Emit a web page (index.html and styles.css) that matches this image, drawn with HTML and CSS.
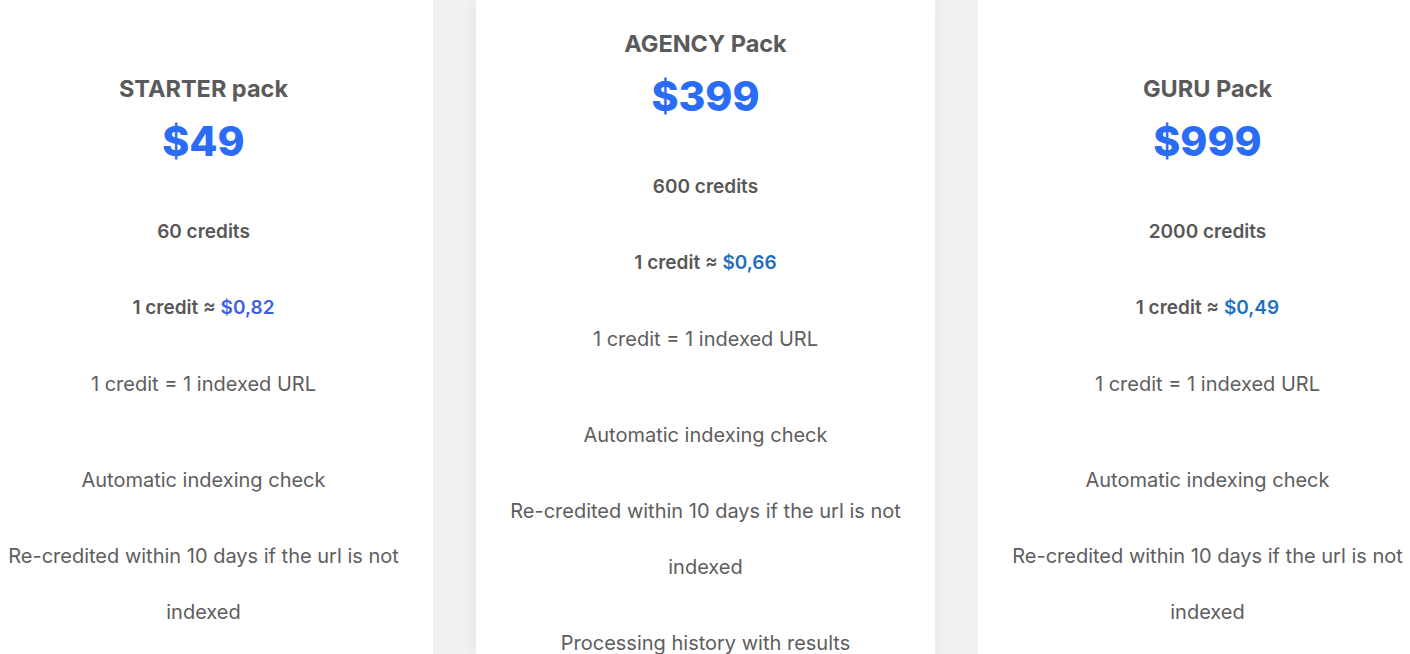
FILE: index.html
```
<!DOCTYPE html>
<html lang="en">
<head>
<meta charset="utf-8">
<title>Pricing</title>
<link rel="stylesheet" href="styles.css">
</head>
<body>
<div class="plans">
  <section class="card">
    <h3 class="title">STARTER pack</h3>
    <div class="price">$49</div>
    <ul class="features">
      <li class="strong">60 credits</li>
      <li class="strong">1 credit ≈ <span class="rate rate-indigo">$0,82</span></li>
      <li>1 credit = 1 indexed URL</li>
      <li class="spaced">Automatic indexing check</li>
      <li>Re-credited within 10 days if the url is not indexed</li>
    </ul>
  </section>
  <section class="card card-featured">
    <h3 class="title">AGENCY Pack</h3>
    <div class="price">$399</div>
    <ul class="features">
      <li class="strong">600 credits</li>
      <li class="strong">1 credit ≈ <span class="rate">$0,66</span></li>
      <li>1 credit = 1 indexed URL</li>
      <li class="spaced">Automatic indexing check</li>
      <li>Re-credited within 10 days if the url is not indexed</li>
      <li>Processing history with results</li>
    </ul>
  </section>
  <section class="card">
    <h3 class="title">GURU Pack</h3>
    <div class="price">$999</div>
    <ul class="features">
      <li class="strong">2000 credits</li>
      <li class="strong">1 credit ≈ <span class="rate">$0,49</span></li>
      <li>1 credit = 1 indexed URL</li>
      <li class="spaced">Automatic indexing check</li>
      <li>Re-credited within 10 days if the url is not indexed</li>
    </ul>
  </section>
</div>
</body>
</html>
```
FILE: styles.css
```
html, body {
  margin: 0;
  padding: 0;
  height: 100%;
  overflow: hidden;
  background: #f1f1f1;
}

body {
  font-family: Inter, "Noto Sans", sans-serif;
  color: #5e5e5e;
}

.plans {
  display: flex;
  gap: 43px;
  margin-left: -26px;
  height: 100%;
}

.card {
  flex: 0 0 459px;
  box-sizing: border-box;
  background: #ffffff;
  padding: 74px 22px 0;
  text-align: center;
}

.card-featured {
  padding-top: 29px;
  box-shadow: 0 0 14px rgba(0, 0, 0, 0.06);
}

.title {
  margin: 0;
  font-size: 23.5px;
  line-height: 30px;
  font-weight: 700;
  color: #5a5a5a;
}

.price {
  margin: 11px 0 0;
  font-size: 41px;
  line-height: 52px;
  font-weight: 800;
  color: #2b6cf6;
}

.features {
  list-style: none;
  margin: 37px 0 0;
  padding: 0;
}

.features li {
  font-size: 20px;
  line-height: 56px;
  margin-bottom: 20px;
}

.features li.strong {
  font-size: 19px;
  font-weight: 600;
  color: #585858;
}

.features li.spaced {
  margin-top: 40px;
}

.rate {
  color: #1f6fc0;
}

.rate-indigo {
  color: #3d5fe3;
}
```
